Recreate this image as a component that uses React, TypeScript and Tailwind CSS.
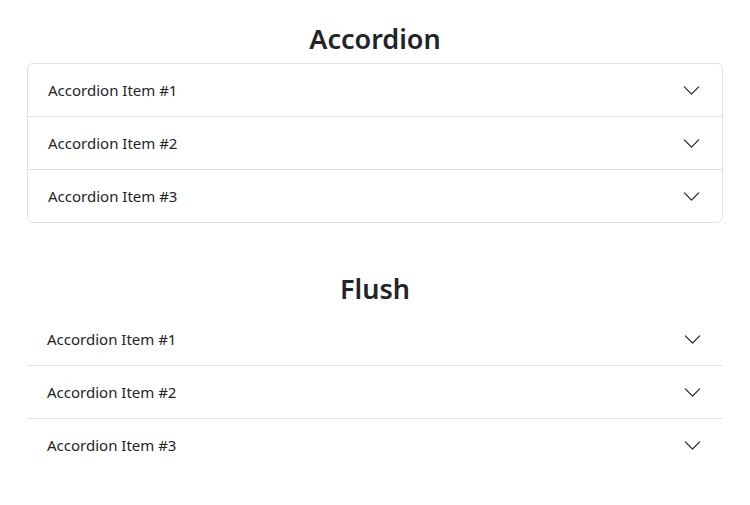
import React from 'react';

const items = ['Accordion Item #1', 'Accordion Item #2', 'Accordion Item #3'];

const Chevron = () => (
  <svg xmlns="http://www.w3.org/2000/svg" className="w-[19px] h-[19px] text-[#212529]" viewBox="0 0 16 16" fill="currentColor">
    <path fillRule="evenodd" d="M1.646 4.646a.5.5 0 0 1 .708 0L8 10.293l5.646-5.647a.5.5 0 0 1 .708.708l-6 6a.5.5 0 0 1-.708 0l-6-6a.5.5 0 0 1 0-.708z" />
  </svg>
);

const Row = ({ label, flush }: { label: string; flush?: boolean }) => (
  <div>
    <button
      type="button"
      className={`flex w-full h-[52px] items-center justify-between text-left text-[15px] text-[#212529] pr-[21px] ${flush ? 'pl-[20px]' : 'pl-[20px]'}`}
    >
      <span>{label}</span>
      <Chevron />
    </button>
  </div>
);

export default function App() {
  return (
    <div className="min-h-[505px] bg-white px-[27px] pt-[22px] font-['Noto_Sans',sans-serif]">
      <h2 className="text-center text-[27px] leading-[34px] font-semibold text-[#212529] mb-[7px]">Accordion</h2>
      <div className="border border-[#dee2e6] rounded-[6px] divide-y divide-[#dee2e6]">
        {items.map((it) => (
          <Row key={it} label={it} />
        ))}
      </div>

      <h2 className="text-center text-[27px] leading-[34px] font-semibold text-[#212529] mt-[49px] mb-[7px]">Flush</h2>
      <div className="divide-y divide-[#dee2e6]">
        {items.map((it) => (
          <Row key={it} label={it} flush />
        ))}
      </div>
    </div>
  );
}
